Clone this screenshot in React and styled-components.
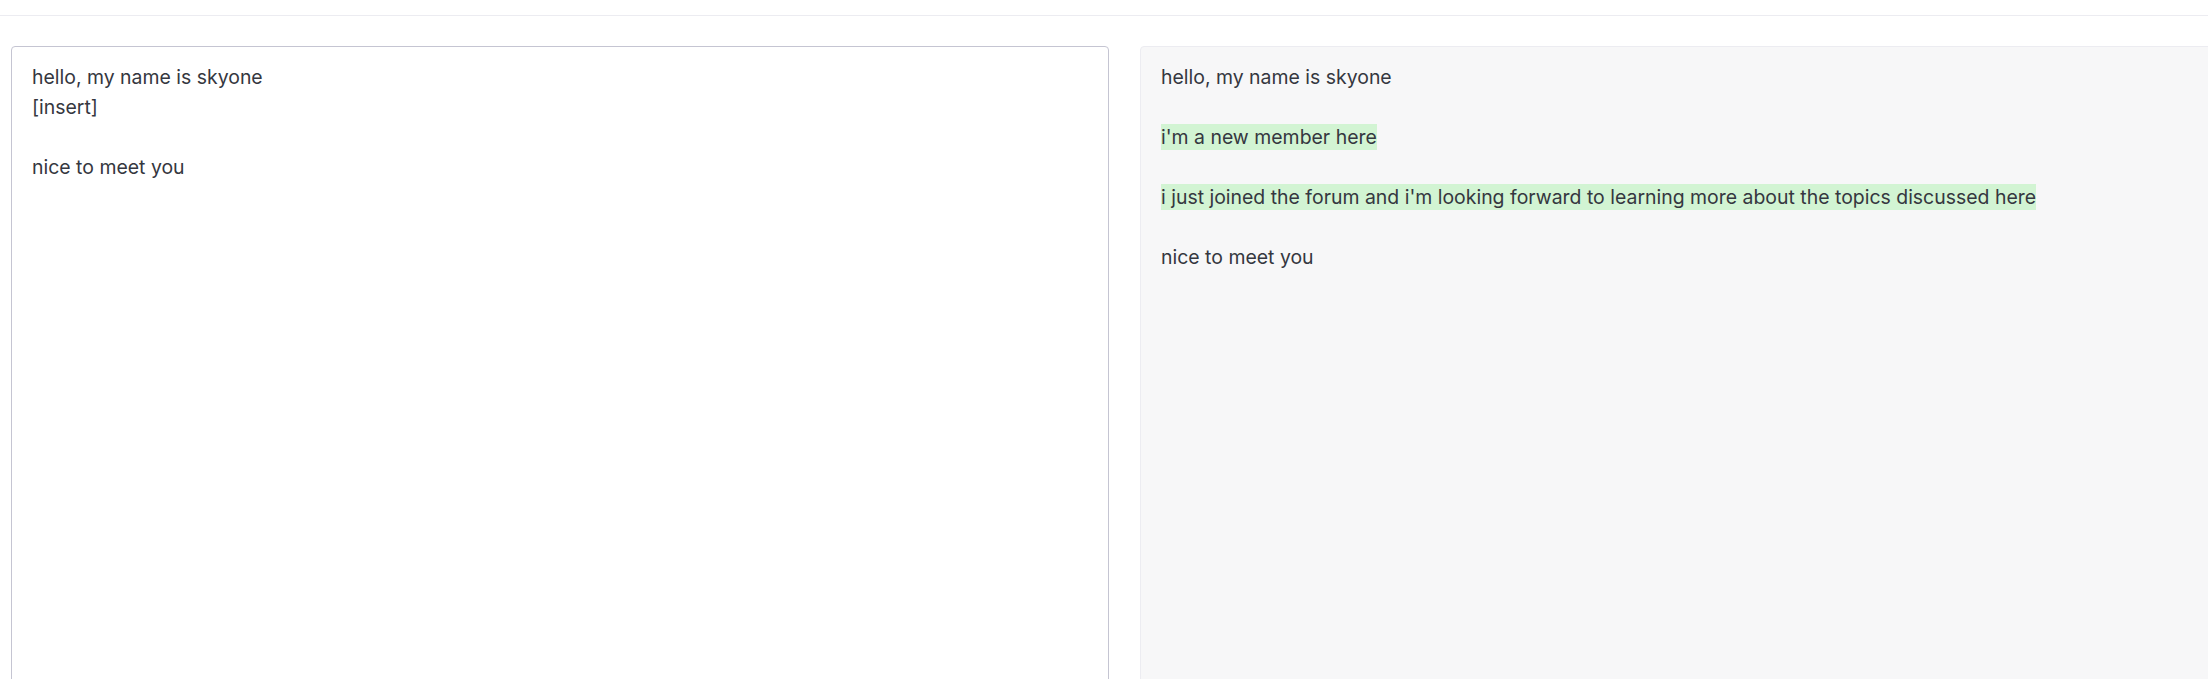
import React from 'react'
import styled, { createGlobalStyle } from 'styled-components'

const GlobalStyle = createGlobalStyle`
  html, body {
    margin: 0;
    padding: 0;
    background: #ffffff;
    overflow: hidden;
  }
  body {
    font-family: Inter, "Noto Sans", "Liberation Sans", sans-serif;
    color: #353740;
  }
`

const Page = styled.div`
  width: 100%;
  height: 679px;
  overflow: hidden;
`

const TopBar = styled.div`
  height: 15px;
  border-bottom: 1px solid #ececf1;
`

const Columns = styled.div`
  display: grid;
  grid-template-columns: 1098px 1098px;
  column-gap: 31px;
  padding: 30px 0 0 11px;
`

const Panel = styled.div`
  box-sizing: border-box;
  height: 700px;
  padding: 15px 20px;
  border: 1px solid ${(p) => (p.$readonly ? '#ececf1' : '#c5c5d2')};
  border-radius: 4px;
  background: ${(p) => (p.$readonly ? '#f7f7f8' : '#ffffff')};
  font-size: 19.45px;
  line-height: 30px;
  white-space: pre-wrap;
`

const Added = styled.span`
  background: #d2f4d3;
  padding: 1px 0;
`

const App = () => {
  return (
    <Page>
      <GlobalStyle />
      <TopBar />
      <Columns>
        <Panel>{'hello, my name is skyone\n[insert]\n\nnice to meet you'}</Panel>
        <Panel $readonly>
          {'hello, my name is skyone\n\n'}
          <Added>i'm a new member here</Added>
          {'\n\n'}
          <Added>
            i just joined the forum and i'm looking forward to learning more
            about the topics discussed here
          </Added>
          {'\n\nnice to meet you'}
        </Panel>
      </Columns>
    </Page>
  )
}

export default App
